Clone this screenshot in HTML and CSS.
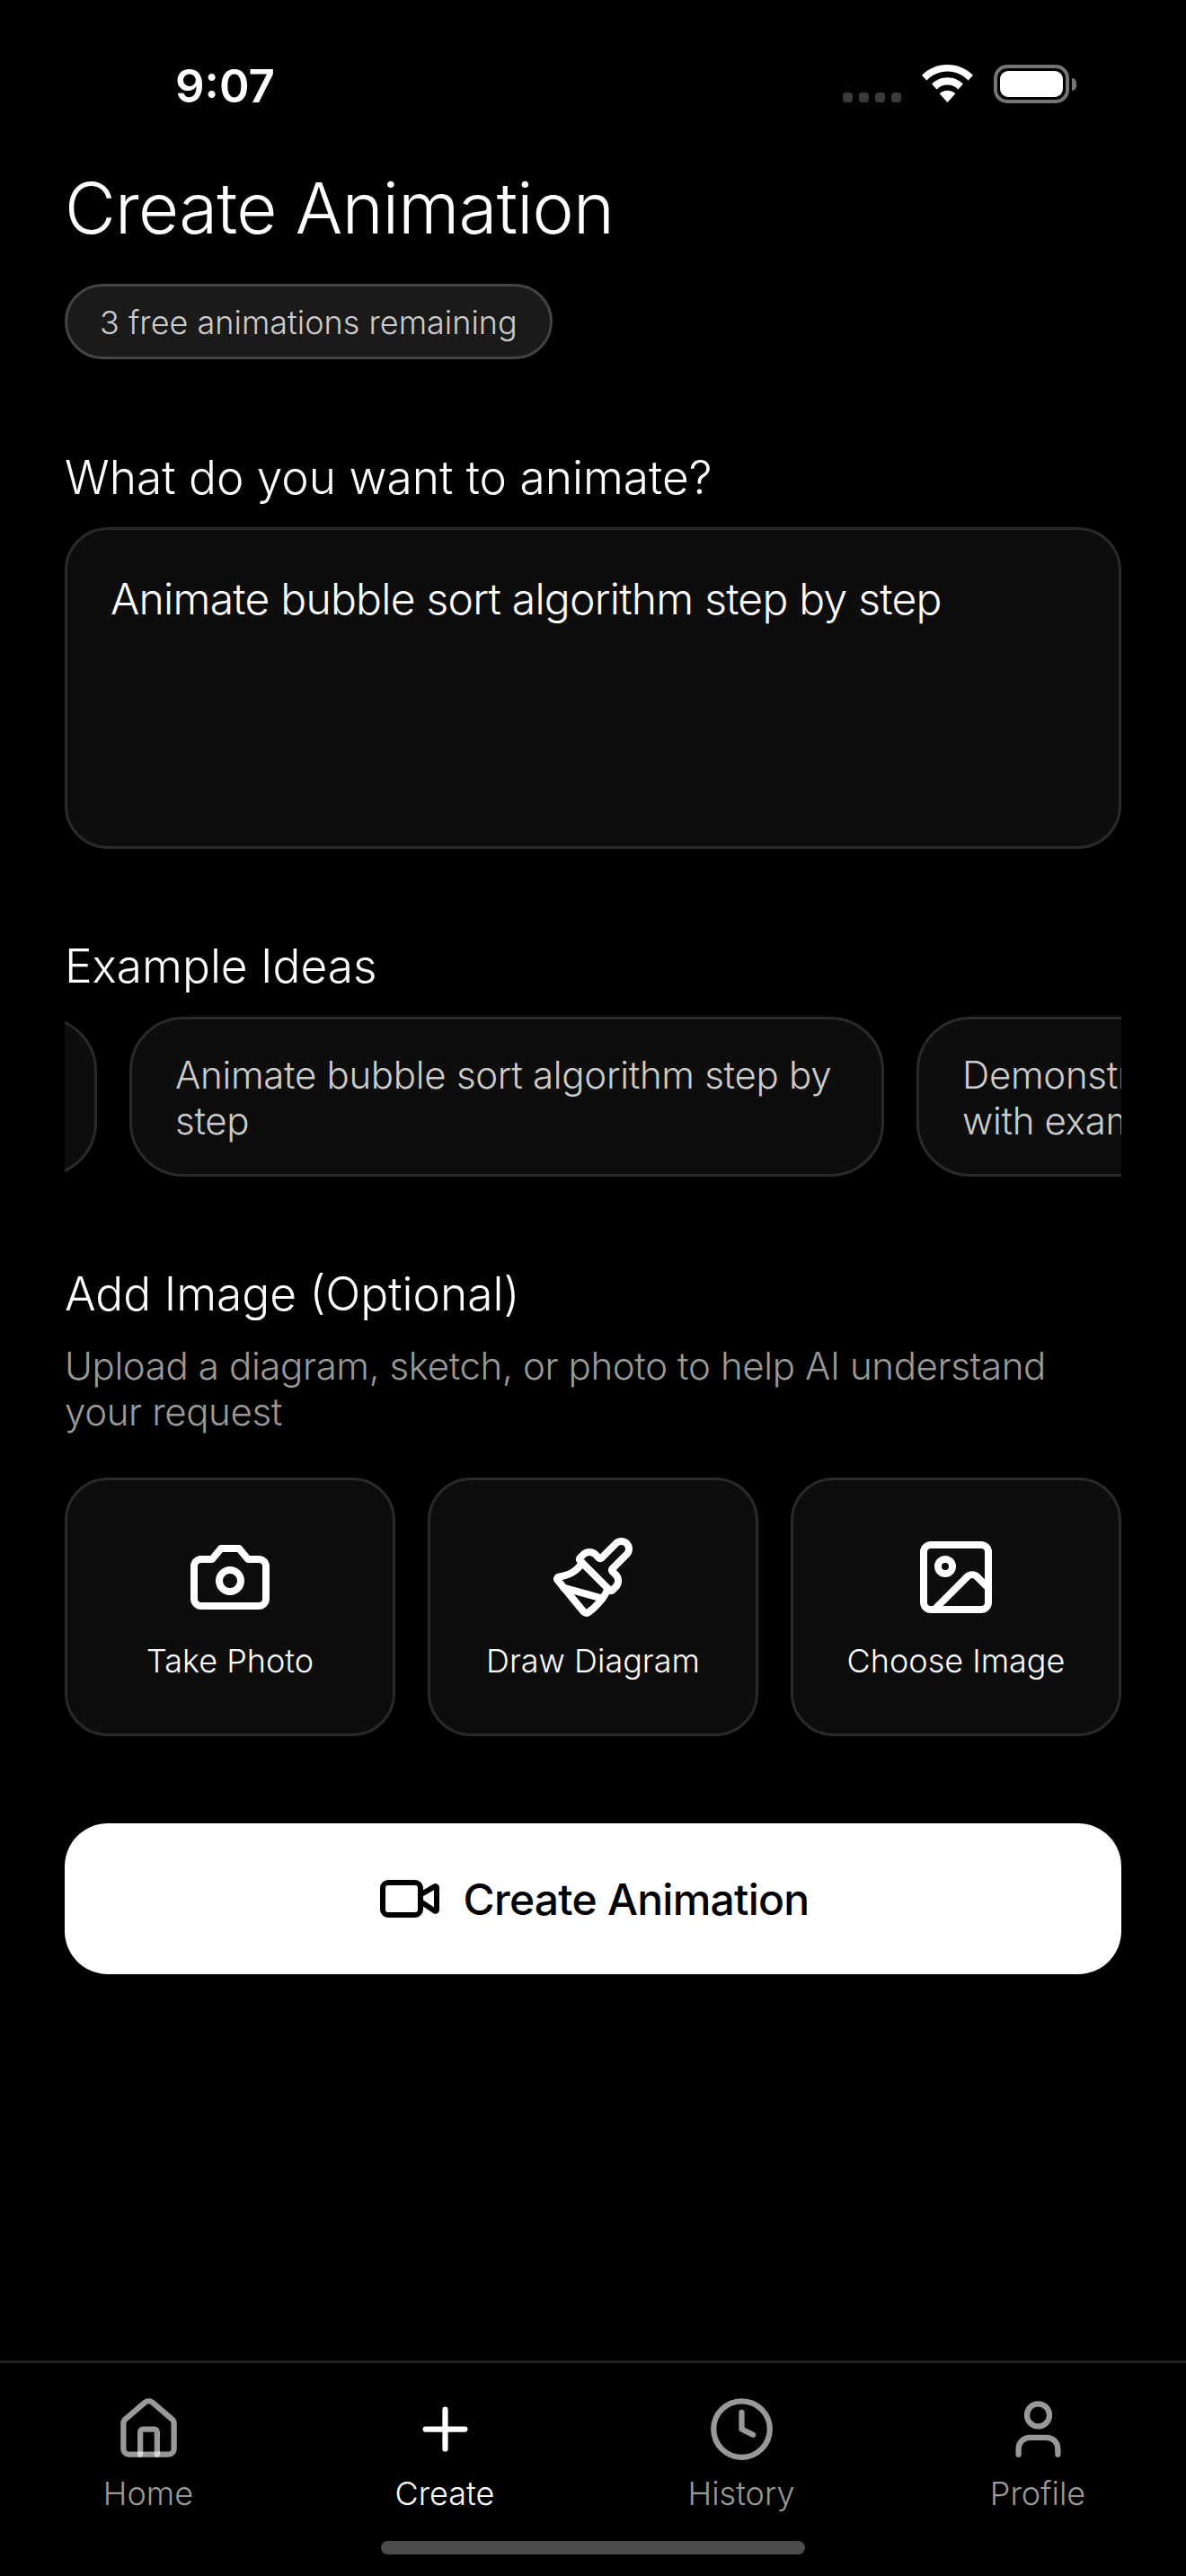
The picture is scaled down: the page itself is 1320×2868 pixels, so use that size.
FILE: index.html
```html
<!DOCTYPE html>
<html lang="en">
<head>
<meta charset="utf-8">
<title>Create Animation</title>
<link rel="stylesheet" href="styles.css">
</head>
<body>
<div class="screen">
  <header class="status">
    <span class="time">9:07</span>
    <div class="status-icons">
      <div class="signal"><i></i><i></i><i></i><i></i></div>
      <svg class="wifi" viewBox="0 0 57 42"><path d="M28.5 0C40 0 50 4.6 57 11.8l-5.400 5.800C45.600 11.300 37.500 7.600 28.500 7.600S11.400 11.300 5.400 17.600L0 11.800C7 4.600 17 0 28.500 0zM28.500 14.300c6.800 0 13 2.800 17.400 7.300l-5.400 5.800c-3-3.100-7.300-5-12-5s-9 1.900-12 5l-5.400-5.800c4.400-4.500 10.600-7.300 17.400-7.300zM28.500 28.700c3.400 0 6.500 1.300 8.800 3.500L28.500 42l-8.800-9.800c2.300-2.200 5.400-3.500 8.800-3.500z"/></svg>
      <div class="battery"><div class="battery-body"><div class="battery-fill"></div></div><div class="battery-tip"></div></div>
    </div>
  </header>

  <main class="content">
    <h1 class="title">Create Animation</h1>
    <div class="pill">3 free animations remaining</div>

    <h2 class="label label-first">What do you want to animate?</h2>
    <div class="prompt">Animate bubble sort algorithm step by step</div>

    <h2 class="label label-next">Example Ideas</h2>
    <div class="chips">
      <div class="chips-track">
        <div class="chip chip-prev"></div>
        <div class="chip">Animate bubble sort algorithm step by step</div>
        <div class="chip">Demonstrate Newton's laws of motion with examples</div>
      </div>
    </div>

    <h2 class="label label-next">Add Image (Optional)</h2>
    <p class="hint">Upload a diagram, sketch, or photo to help AI understand your request</p>

    <div class="sources">
      <div class="source">
        <svg class="source-icon" viewBox="0 0 24 24"><path d="M14.500 4h-5L7 7H4a2 2 0 0 0-2 2v9a2 2 0 0 0 2 2h16a2 2 0 0 0 2-2V9a2 2 0 0 0-2-2h-3l-2.500-3z"/><circle cx="12" cy="13" r="3"/></svg>
        <span>Take Photo</span>
      </div>
      <div class="source">
        <svg class="source-icon" viewBox="0 0 24 24"><path d="m14.622 17.897-10.680-2.913"/><path d="M18.376 2.622a1 1 0 1 1 3.002 3.002L17.360 9.643a.5.5 0 0 0 0 .707l.944.944a2.410 2.410 0 0 1 0 3.408l-.944.944a.5.5 0 0 1-.707 0L8.354 7.348a.5.5 0 0 1 0-.707l.944-.944a2.410 2.410 0 0 1 3.408 0l.944.944a.5.5 0 0 0 .707 0z"/><path d="M9 8c-1.804 2.710-3.970 3.460-6.583 3.948a.507.507 0 0 0-.302.819l7.320 8.883a1 1 0 0 0 1.185.204C12.735 20.405 16 16.792 16 15"/></svg>
        <span>Draw Diagram</span>
      </div>
      <div class="source">
        <svg class="source-icon" viewBox="0 0 24 24"><rect x="3" y="3" width="18" height="18" rx="2"/><circle cx="9" cy="9" r="2"/><path d="m21 15-3.086-3.086a2 2 0 0 0-2.828 0L6 21"/></svg>
        <span>Choose Image</span>
      </div>
    </div>

    <button class="cta" type="button">
      <svg class="cta-icon" viewBox="0 0 24 24"><path d="m16 13 5.223 3.482a.5.5 0 0 0 .777-.416V7.870a.5.5 0 0 0-.752-.432L16 10.500"/><rect x="2" y="6" width="14" height="12" rx="2"/></svg>
      <span>Create Animation</span>
    </button>
  </main>

  <nav class="tabs">
    <div class="tab">
      <svg class="tab-icon" viewBox="0 0 24 24"><path d="M15 21v-8a1 1 0 0 0-1-1h-4a1 1 0 0 0-1 1v8"/><path d="M3 10a2 2 0 0 1 .709-1.528l7-5.999a2 2 0 0 1 2.582 0l7 5.999A2 2 0 0 1 21 10v9a2 2 0 0 1-2 2H5a2 2 0 0 1-2-2z"/></svg>
      <span class="tab-label">Home</span>
    </div>
    <div class="tab tab-active">
      <svg class="tab-icon" viewBox="0 0 24 24"><path d="M5 12h14"/><path d="M12 5v14"/></svg>
      <span class="tab-label">Create</span>
    </div>
    <div class="tab">
      <svg class="tab-icon" viewBox="0 0 24 24"><circle cx="12" cy="12" r="10"/><path d="M12 6v6l4 2"/></svg>
      <span class="tab-label">History</span>
    </div>
    <div class="tab">
      <svg class="tab-icon" viewBox="0 0 24 24"><path d="M19 21v-2a4 4 0 0 0-4-4H9a4 4 0 0 0-4 4v2"/><circle cx="12" cy="7" r="4"/></svg>
      <span class="tab-label">Profile</span>
    </div>
  </nav>
  <div class="home-bar"><div class="home-indicator"></div></div>
</div>
</body>
</html>
```

FILE: styles.css
```css
* { box-sizing: border-box; }
html, body { margin: 0; padding: 0; background: #000; }
body { font-family: "Inter", "Liberation Sans", sans-serif; color: #fff; }

.screen { width: 1320px; height: 2868px; display: flex; flex-direction: column; background: #000; overflow: hidden; }

/* status bar */
.status { height: 184px; flex: none; display: flex; justify-content: space-between; align-items: flex-start; padding: 72px 122px 0 195px; }
.time { font-size: 51px; font-weight: 600; line-height: 48px; }
.status-icons { display: flex; align-items: flex-end; gap: 23px; }
.signal { display: flex; gap: 7px; margin-bottom: 1px; }
.signal i { width: 11px; height: 11px; border-radius: 3.500px; background: #3a3a3a; }
.wifi { width: 57px; height: 42px; fill: #fff; display: block; margin-bottom: 1px; }
.battery { display: flex; align-items: center; gap: 3px; }
.battery-body { width: 84px; height: 43px; border: 4px solid #757575; border-radius: 15px; padding: 3px; }
.battery-fill { width: 100%; height: 100%; background: #fff; border-radius: 9px; }
.battery-tip { width: 5px; height: 14px; background: #757575; border-radius: 0 7px 7px 0; }

/* main column */
.content { flex: 1; display: flex; flex-direction: column; padding: 0 72px; }
.title { margin: 0; font-size: 78px; font-weight: 300; line-height: 96px; letter-spacing: -0.75px; }
.pill { align-self: flex-start; margin-top: 36px; height: 84px; padding: 2px 36px 0; display: flex; align-items: center; background: #1a1a1a; border: 3px solid #444; border-radius: 42px; font-size: 36px; font-weight: 300; color: #ccc; }

.label { margin: 0; font-size: 51.400px; font-weight: 300; line-height: 66px; }
.label-first { margin-top: 98px; }
.label-next { margin-top: 97px; }

.prompt { margin-top: 23px; height: 358px; padding: 47px 48px; background: #0d0d0d; border: 3px solid #2a2a2a; border-radius: 48px; font-size: 48px; font-weight: 300; line-height: 60px; letter-spacing: -0.75px; color: #fff; }

.chips { margin-top: 24px; overflow: hidden; }
.chips-track { display: flex; gap: 36px; margin-left: -264px; width: max-content; }
.chip { width: 840px; height: 178px; padding: 36px 48px; background: #0d0d0d; border: 3px solid #2a2a2a; border-radius: 60px; font-size: 42px; font-weight: 300; line-height: 51px; letter-spacing: -0.300px; color: #ccc; }
.chip-prev { width: 300px; }

.hint { margin: 22px 0 0; font-size: 42px; font-weight: 300; line-height: 51px; letter-spacing: -0.375px; color: #999; }

.sources { margin-top: 48px; display: grid; grid-template-columns: repeat(3, 1fr); gap: 36px; }
.source { height: 288px; padding-top: 60px; display: flex; flex-direction: column; align-items: center; background: #0d0d0d; border: 3px solid #2a2a2a; border-radius: 48px; font-size: 36px; font-weight: 300; line-height: 48px; color: #fff; }
.source-icon { width: 96px; height: 96px; fill: none; stroke: #fff; stroke-width: 2; stroke-linecap: round; stroke-linejoin: round; margin-bottom: 21px; }

.cta { margin-top: 97px; height: 168px; width: 100%; display: flex; align-items: center; justify-content: center; gap: 24px; background: #fff; border: 0; border-radius: 48px; color: #000; font-family: inherit; font-size: 48px; font-weight: 500; letter-spacing: -0.75px; }
.cta-icon { width: 72px; height: 72px; fill: none; stroke: #000; stroke-width: 2; stroke-linecap: round; stroke-linejoin: round; }

/* tab bar */
.tabs { flex: none; height: 171px; border-top: 3px solid #222; display: grid; grid-template-columns: repeat(4, 1fr); padding-top: 36px; }
.tab { display: flex; flex-direction: column; align-items: center; font-size: 36px; font-weight: 300; line-height: 48px; color: #999; }
.tab-icon { width: 75px; height: 75px; fill: none; stroke: rgba(255,255,255,.6); stroke-width: 2; stroke-linecap: round; stroke-linejoin: round; }
.tab-label { margin-top: 10px; }
.tab-active { color: #fff; }
.tab-active .tab-icon { stroke: #fff; }

.home-bar { flex: none; height: 69px; display: flex; justify-content: center; padding-top: 30px; }
.home-indicator { width: 472px; height: 15px; border-radius: 8px; background: #4d4d4d; }
```
